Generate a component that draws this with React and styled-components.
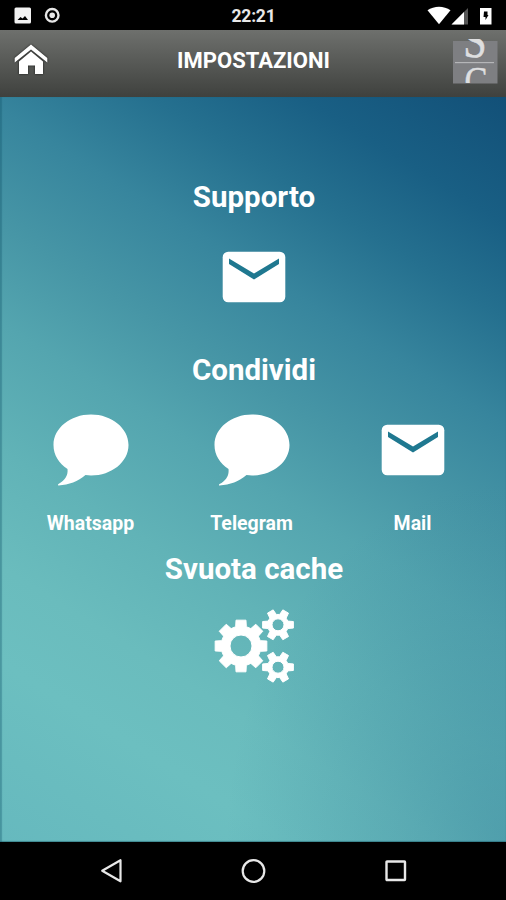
import React from "react";
import styled, { createGlobalStyle } from "styled-components";

const GlobalStyle = createGlobalStyle`
  body {
    margin: 0;
    background: #000;
    font-family: Roboto, "Liberation Sans", sans-serif;
    color: #fff;
  }

  svg {
    display: block;
  }
`;

const Screen = styled.div`
  width: 506px;
  height: 900px;
  display: flex;
  flex-direction: column;
  overflow: hidden;
  background: #000;
`;

const StatusBar = styled.div`
  height: 30px;
  box-sizing: border-box;
  padding: 0 13px 0 14px;
  display: grid;
  grid-template-columns: 1fr auto 1fr;
  align-items: center;
`;

const StatusIcons = styled.div`
  display: flex;
  align-items: center;
  justify-content: ${(props) => (props.$end ? "flex-end" : "flex-start")};
`;

const Clock = styled.div`
  font-size: 17.5px;
  font-weight: 700;
  line-height: 20px;
  letter-spacing: -0.2px;
  color: #e8e8e8;
  padding-top: 2px;
`;

const Header = styled.header`
  height: 67px;
  box-sizing: border-box;
  padding: 0 8px 5px 14px;
  display: grid;
  grid-template-columns: 1fr auto 1fr;
  align-items: center;
  background: linear-gradient(#6e706d, #3f413e);
`;

const HomeLink = styled.a`
  filter: drop-shadow(0 0 1px rgba(0, 0, 0, 0.7));
  padding-bottom: 3px;
`;

const Title = styled.h1`
  margin: 0;
  padding-right: 5px;
  font-size: 22px;
  line-height: 28px;
  font-weight: 700;
`;

const LogoLink = styled.a`
  justify-self: end;
`;

const Content = styled.main`
  height: 745px;
  box-sizing: border-box;
  padding-top: 82px;
  display: flex;
  flex-direction: column;
  align-items: center;
  box-shadow: inset 2px 0 1px rgba(20, 90, 110, 0.35),
    inset 0 -1px 1px rgba(20, 80, 95, 0.45);
  background: radial-gradient(
      280px 360px at 100% 100%,
      rgba(45, 120, 150, 0.4),
      rgba(45, 120, 150, 0)
    ),
    linear-gradient(
      212deg,
      #125078 0%,
      #195f84 12%,
      #25708f 21%,
      #37859d 31%,
      #4796a6 42%,
      #54a5af 51%,
      #61b3b7 63%,
      #6abcbd 74%,
      #6cbfc0 83%,
      #66b9be 100%
    );
`;

const Section = styled.section`
  height: ${(props) => props.$height}px;
  width: 100%;
  display: flex;
  flex-direction: column;
  align-items: center;
`;

const SectionTitle = styled.h2`
  margin: 0;
  font-size: 29.5px;
  line-height: 36px;
  font-weight: 700;
  padding-left: 2px;
`;

const IconButton = styled.a`
  padding-top: ${(props) => props.$top}px;
  padding-left: 2px;
`;

const ShareRow = styled.div`
  align-self: flex-start;
  margin-left: 10px;
  display: grid;
  grid-template-columns: repeat(3, 161px);
`;

const ShareItem = styled.a`
  display: flex;
  flex-direction: column;
  align-items: center;
`;

const ShareIcon = styled.div`
  height: 121px;
  box-sizing: border-box;
  padding-top: 3px;
  display: flex;
  align-items: center;
`;

const ShareLabel = styled.span`
  font-size: 19.5px;
  line-height: 30px;
  font-weight: 700;
`;

const NavBar = styled.nav`
  flex: 1;
  padding: 0 98px 0 100px;
  display: flex;
  align-items: center;
  justify-content: space-between;
`;

const gearPath = (cx, cy, teeth, outer, body, base, tip) => {
  const points = [];
  const add = (r, a) =>
    points.push(
      `${(cx + r * Math.cos(a)).toFixed(2)} ${(cy + r * Math.sin(a)).toFixed(2)}`
    );
  for (let i = 0; i < teeth; i++) {
    const a = (i * 2 * Math.PI) / teeth;
    add(body, a - base);
    add(outer, a - tip);
    add(outer, a + tip);
    add(body, a + base);
  }
  return `M${points.join("L")}Z`;
};

const holePath = (cx, cy, r) =>
  `M${cx - r} ${cy}a${r} ${r} 0 1 0 ${2 * r} 0a${r} ${r} 0 1 0 ${-2 * r} 0Z`;

const Envelope = () => (
  <svg width="64" height="52" viewBox="0 0 64 52">
    <rect x="0.7" y="0.7" width="62.6" height="50.6" rx="5.5" fill="#fff" />
    <path d="M7 7.5L32 22.5L57 7.5V13L32 28.5L7 13Z" fill="#1f7890" />
  </svg>
);

const Bubble = () => (
  <svg width="76" height="72" viewBox="0 0 76 72">
    <path
      d="M38 0.5C58.7 0.5 75.5 14 75.5 31S58.7 61.5 38 61.5C36 61.5 34.5 61.4 32.5 61.1C25 67.5 16 71 5.5 71.5C4.8 71.5 4.8 70.5 5.5 70.1C12 66.5 15.3 61.5 14.5 55.1C5.8 49.3 0.5 41 0.5 31C0.5 14 17.3 0.5 38 0.5Z"
      fill="#fff"
    />
  </svg>
);

const Gears = () => (
  <svg width="80" height="74" viewBox="0 0 80 74">
    <g fill="#fff" stroke="#fff" strokeWidth="1" strokeLinejoin="round" fillRule="evenodd">
      <path d={gearPath(27, 37, 8, 26.3, 20, 0.27, 0.19) + holePath(27, 37, 11)} />
      <path d={gearPath(64, 15.8, 6, 15.7, 10.5, 0.36, 0.21) + holePath(64, 15.8, 6)} />
      <path d={gearPath(64, 58.2, 6, 15.7, 10.5, 0.36, 0.21) + holePath(64, 58.2, 6)} />
    </g>
  </svg>
);

const Home = () => (
  <svg width="34" height="31" viewBox="0 0 34 31">
    <path d="M17 0.5L33.3 14V18.5L17 5.5L0.7 18.5V14Z" fill="#fff" />
    <path d="M17 7.6L29 17.4V30H21V21.5H14V30H5V17.4Z" fill="#fff" />
  </svg>
);

const Logo = () => (
  <svg width="46" height="46" viewBox="0 0 46 46">
    <defs>
      <clipPath id="upper">
        <rect x="0" y="1" width="46" height="21" />
      </clipPath>
      <clipPath id="lower">
        <rect x="0" y="25" width="46" height="20" />
      </clipPath>
    </defs>
    <rect x="1" y="3" width="44.5" height="42.5" fill="#7e7f82" />
    <rect x="3" y="24" width="39" height="1.2" fill="#b5b6b8" />
    <g
      fill="#dedfe0"
      stroke="#dedfe0"
      strokeWidth="0.6"
      fontFamily="Liberation Serif, serif"
      textAnchor="middle"
    >
      <g clipPath="url(#upper)">
        <text transform="translate(23 18.8) scale(0.84 1)" fontSize="50">
          S
        </text>
      </g>
      <g clipPath="url(#lower)">
        <text transform="translate(24 55.5) scale(0.86 1)" fontSize="40">
          C
        </text>
      </g>
    </g>
  </svg>
);

const shareOptions = [
  { label: "Whatsapp", Icon: Bubble },
  { label: "Telegram", Icon: Bubble },
  { label: "Mail", Icon: Envelope },
];

function App() {
  return (
    <>
      <GlobalStyle />
      <Screen>
        <StatusBar>
          <StatusIcons>
            <svg width="48" height="18" viewBox="0 0 48 18">
              <rect x="0.5" y="1.5" width="16.5" height="16" rx="1.5" fill="#f2f2f2" />
              <path d="M3.5 14L6.5 11L8.5 12.5L11 10L14 14Z" fill="#000" />
              <circle cx="38.2" cy="9.3" r="6.3" fill="none" stroke="#e6e6e6" strokeWidth="2.4" />
              <circle cx="38.2" cy="9.3" r="2.8" fill="#e6e6e6" />
            </svg>
          </StatusIcons>
          <Clock>22:21</Clock>
          <StatusIcons $end>
            <svg width="66" height="19" viewBox="0 0 66 19">
              <path d="M0.5 4.3C7 -0.4 17 -0.4 23.5 4.3L12 18.3Z" fill="#fff" />
              <path d="M41 2V18.5H24.5Z" fill="#555" />
              <path d="M37 6V18.5H24.5Z" fill="#fff" />
              <path d="M53 2H64.5V18.5H53Z" fill="#fff" />
              <path d="M57 5.5H60.5V9H61.5L58.5 14V11H56.5Z" fill="#000" />
            </svg>
          </StatusIcons>
        </StatusBar>
        <Header>
          <HomeLink>
            <Home />
          </HomeLink>
          <Title>IMPOSTAZIONI</Title>
          <LogoLink>
            <Logo />
          </LogoLink>
        </Header>
        <Content>
          <Section $height={173}>
            <SectionTitle>Supporto</SectionTitle>
            <IconButton $top={36}>
              <Envelope />
            </IconButton>
          </Section>
          <Section $height={199}>
            <SectionTitle>Condividi</SectionTitle>
            <ShareRow>
              {shareOptions.map(({ label, Icon }) => (
                <ShareItem key={label}>
                  <ShareIcon>
                    <Icon />
                  </ShareIcon>
                  <ShareLabel>{label}</ShareLabel>
                </ShareItem>
              ))}
            </ShareRow>
          </Section>
          <Section $height={140}>
            <SectionTitle>Svuota cache</SectionTitle>
            <IconButton $top={22}>
              <Gears />
            </IconButton>
          </Section>
        </Content>
        <NavBar>
          <svg width="24" height="26" viewBox="0 0 24 26">
            <path d="M20.5 2.2V23.3L2.2 12.8Z" fill="none" stroke="#e8e8e8" strokeWidth="2.2" strokeLinejoin="round" />
          </svg>
          <svg width="26" height="26" viewBox="0 0 26 26">
            <circle cx="12.5" cy="13" r="10.8" fill="none" stroke="#e8e8e8" strokeWidth="2.2" />
          </svg>
          <svg width="24" height="26" viewBox="0 0 24 26">
            <rect x="2.5" y="3.5" width="18.5" height="18.5" rx="0.5" fill="none" stroke="#e8e8e8" strokeWidth="2.4" />
          </svg>
        </NavBar>
      </Screen>
    </>
  );
}

export default App;
